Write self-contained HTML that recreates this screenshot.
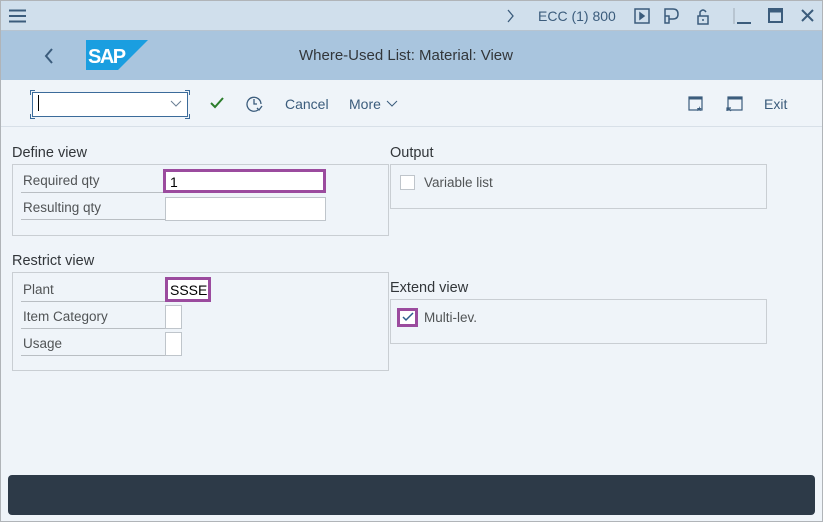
<!DOCTYPE html>
<html><head><style>
*{box-sizing:border-box;margin:0;padding:0}
body{width:823px;height:522px;overflow:hidden;font-family:"Liberation Sans",sans-serif;background:#eff4f9;position:relative;color:#32363a}
.a{position:absolute}
.frame{left:0;top:0;width:823px;height:522px;border:1px solid #b0b4b8;border-top:none}
.top{left:0;top:0;width:823px;height:31px;background:#d0dfec;border-bottom:1px solid #b7c4d0;border-top:1px solid #b0b4b8}
.title{left:0;top:31px;width:823px;height:49px;background:#a9c5de}
.tb{left:0;top:80px;width:823px;height:47px;background:#eff4f9;border-bottom:1px solid #d8e0e8}
.t{font-size:14px;color:#32363a;white-space:nowrap}
.hd{font-size:14.5px;color:#32363a}
.grp{border:1px solid #c9ced3}
.lbl{font-size:13.5px;color:#515456;border-bottom:1px solid #b9bec3;height:24px;line-height:24px;padding-left:2px}
.inp{background:#fff;border:1px solid #bfc5cb;font-size:14px;color:#000;padding-left:4px;line-height:20px}
.sel{border:3px solid #9b4b9e}
.bar{left:8px;top:475px;width:807px;height:40px;background:#2d3a48;border-radius:4px}
.c{position:absolute;width:5px;height:5px;border-color:#3b6b9a;border-style:solid;border-width:0}
</style></head><body>
<div class="a top"></div>
<svg class="a" style="left:9px;top:9px" width="18" height="14"><path d="M0 1.5h17M0 7h17M0 12.5h17" stroke="#3b5c7c" stroke-width="2"/></svg>
<svg class="a" style="left:507px;top:9px" width="8" height="14"><path d="M1 1l5 6-5 6" stroke="#3b5c7c" stroke-width="1.3" fill="none"/></svg>
<div class="a t" style="left:538px;top:8px;color:#3b5c7c">ECC (1) 800</div>
<svg class="a" style="left:634px;top:7px" width="120" height="18" fill="none" stroke="#3b5c7c" stroke-width="1.5">
<rect x="1" y="2" width="14" height="14"/><path d="M6 6l4 3-4 3z" fill="#3b5c7c"/>
<path d="M31 2h8q5 0 5 5t-5 5h-4v4h-4zM31 9h4v3"/>
<rect x="64" y="9" width="10" height="8"/><path d="M66 9V5q3-4 6 0"/><path d="M69 12v2"/>
<path d="M100 1v16" stroke="#b0bcc8"/>
</svg>
<svg class="a" style="left:736px;top:8px" width="80" height="16" fill="none" stroke="#3b5c7c" stroke-width="2">
<path d="M1 15h14"/><rect x="33" y="1" width="13" height="13"/><path d="M33 3h13" stroke-width="3"/><path d="M66 2l11 11M77 2L66 13"/>
</svg>
<div class="a title"></div>
<svg class="a" style="left:43px;top:47px" width="12" height="18"><path d="M9 2L3 9l6 7" stroke="#3b5c7c" stroke-width="2" fill="none"/></svg>
<svg class="a" style="left:86px;top:40px" width="62" height="30"><polygon points="0,0 62,0 32,30 0,30" fill="#1a9ee0"/><text x="2" y="23" font-family="Liberation Sans" font-weight="bold" font-size="20" fill="#fff" letter-spacing="-1.5">SAP</text></svg>
<div class="a" style="left:299px;top:47px;font-size:15px;color:#32363a">Where-Used List: Material: View</div>
<div class="a tb"></div>
<div class="a" style="left:32px;top:92px;width:156px;height:25px;background:#fff;border:1px solid #3b6b9a"></div>
<div class="c" style="left:30px;top:90px;border-left-width:1px;border-top-width:1px"></div>
<div class="c" style="left:185px;top:90px;border-right-width:1px;border-top-width:1px"></div>
<div class="c" style="left:30px;top:114px;border-left-width:1px;border-bottom-width:1px"></div>
<div class="c" style="left:185px;top:114px;border-right-width:1px;border-bottom-width:1px"></div>
<div class="a" style="left:38px;top:95px;width:1px;height:16px;background:#000"></div>
<svg class="a" style="left:170px;top:100px" width="12" height="8"><path d="M1 1l5 5 5-5" stroke="#6a7f94" fill="none"/></svg>
<svg class="a" style="left:210px;top:97px" width="14" height="12"><path d="M1 6l4 4 8-9" stroke="#2b7d2b" stroke-width="2" fill="none"/></svg>
<svg class="a" style="left:246px;top:95px" width="18" height="18" fill="none" stroke="#3b5c7c" stroke-width="1.3"><path d="M12 15A7 7 0 1 1 15 9"/><path d="M8 4v5h3M11 13l2 2 3-4"/></svg>
<div class="a t" style="left:285px;top:96px;color:#3b5c7c">Cancel</div>
<div class="a t" style="left:349px;top:96px;color:#3b5c7c">More</div>
<svg class="a" style="left:386px;top:100px" width="12" height="8"><path d="M1 1l5 5 5-5" stroke="#3b5c7c" fill="none"/></svg>
<svg class="a" style="left:688px;top:96px" width="60" height="16" fill="none" stroke="#3b5c7c" stroke-width="1.2">
<rect x="1" y="1" width="13" height="13"/><path d="M1 2h13" stroke-width="3"/><path d="M11 10l1 2h2l-1.5 1 .5 2-2-1-2 1 .5-2L9 12h2z" fill="#3b5c7c" stroke="none"/>
<rect x="40" y="1" width="14" height="13"/><path d="M40 2h14" stroke-width="3"/><path d="M39 15v-3h4M40 12l3 3"/>
</svg>
<div class="a t" style="left:764px;top:96px;color:#3b5c7c">Exit</div>

<div class="a hd" style="left:12px;top:145px">Define view</div>
<div class="a grp" style="left:12px;top:164px;width:377px;height:72px"></div>
<div class="a lbl" style="left:21px;top:169px;width:145px">Required qty</div>
<div class="a inp sel" style="left:163px;top:169px;width:163px;height:24px">1</div>
<div class="a lbl" style="left:21px;top:196px;width:145px">Resulting qty</div>
<div class="a inp" style="left:165px;top:197px;width:161px;height:24px"></div>

<div class="a hd" style="left:12px;top:253px">Restrict view</div>
<div class="a grp" style="left:12px;top:272px;width:377px;height:99px"></div>
<div class="a lbl" style="left:21px;top:278px;width:145px">Plant</div>
<div class="a inp sel" style="left:165px;top:277px;width:46px;height:25px;padding-left:2px">SSSE</div>
<div class="a lbl" style="left:21px;top:305px;width:145px">Item Category</div>
<div class="a inp" style="left:165px;top:305px;width:17px;height:24px"></div>
<div class="a lbl" style="left:21px;top:332px;width:145px">Usage</div>
<div class="a inp" style="left:165px;top:332px;width:17px;height:24px"></div>

<div class="a hd" style="left:390px;top:145px">Output</div>
<div class="a grp" style="left:390px;top:164px;width:377px;height:45px"></div>
<div class="a" style="left:400px;top:175px;width:15px;height:15px;background:#fff;border:1px solid #bfc5cb"></div>
<div class="a" style="left:424px;top:175px;font-size:13.5px;color:#515456">Variable list</div>

<div class="a hd" style="left:390px;top:280px">Extend view</div>
<div class="a grp" style="left:390px;top:299px;width:377px;height:45px"></div>
<div class="a" style="left:397px;top:308px;width:21px;height:19px;background:#fff;border:3px solid #9b4b9e"></div>
<svg class="a" style="left:402px;top:312px" width="12" height="10"><path d="M1 5l3 3 7-7" stroke="#2c5d8c" stroke-width="1.5" fill="none"/></svg>
<div class="a" style="left:424px;top:310px;font-size:13.5px;color:#515456">Multi-lev.</div>

<div class="a bar"></div>
<div class="a frame"></div>
</body></html>
